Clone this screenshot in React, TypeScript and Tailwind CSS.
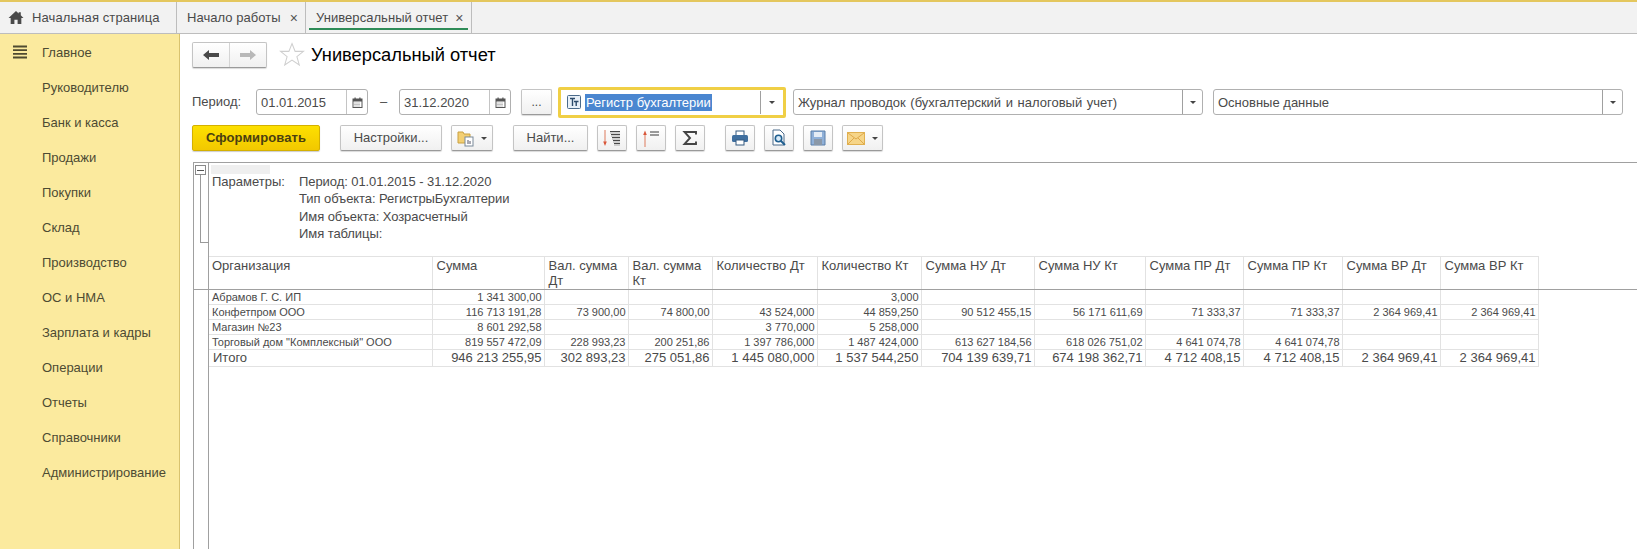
import type { ReactNode } from 'react';

const menu = [
  'Главное',
  'Руководителю',
  'Банк и касса',
  'Продажи',
  'Покупки',
  'Склад',
  'Производство',
  'ОС и НМА',
  'Зарплата и кадры',
  'Операции',
  'Отчеты',
  'Справочники',
  'Администрирование',
];

const columns = [
  { title: 'Организация', w: 'w-[223px]' },
  { title: 'Сумма', w: 'w-[112px]' },
  { title: 'Вал. сумма Дт', w: 'w-[84px]' },
  { title: 'Вал. сумма Кт', w: 'w-[84px]' },
  { title: 'Количество Дт', w: 'w-[105px]' },
  { title: 'Количество Кт', w: 'w-[104px]' },
  { title: 'Сумма НУ Дт', w: 'w-[113px]' },
  { title: 'Сумма НУ Кт', w: 'w-[111px]' },
  { title: 'Сумма ПР Дт', w: 'w-[98px]' },
  { title: 'Сумма ПР Кт', w: 'w-[99px]' },
  { title: 'Сумма ВР Дт', w: 'w-[98px]' },
  { title: 'Сумма ВР Кт', w: 'w-[98px]' },
];

const rows = [
  ['Абрамов Г. С. ИП', '1 341 300,00', '', '', '', '3,000', '', '', '', '', '', ''],
  ['Конфетпром ООО', '116 713 191,28', '73 900,00', '74 800,00', '43 524,000', '44 859,250', '90 512 455,15', '56 171 611,69', '71 333,37', '71 333,37', '2 364 969,41', '2 364 969,41'],
  ['Магазин №23', '8 601 292,58', '', '', '3 770,000', '5 258,000', '', '', '', '', '', ''],
  ['Торговый дом "Комплексный" ООО', '819 557 472,09', '228 993,23', '200 251,86', '1 397 786,000', '1 487 424,000', '613 627 184,56', '618 026 751,02', '4 641 074,78', '4 641 074,78', '', ''],
];

const total = ['Итого', '946 213 255,95', '302 893,23', '275 051,86', '1 445 080,000', '1 537 544,250', '704 139 639,71', '674 198 362,71', '4 712 408,15', '4 712 408,15', '2 364 969,41', '2 364 969,41'];

const btn = 'h-[26px] flex items-center justify-center rounded-[2px] border border-[#c4c4c4] border-b-[#9a9a9a] bg-gradient-to-b from-white to-[#f0f0f0] shadow-[0_1px_1px_rgba(0,0,0,0.15)]';

const Tab = ({ label, active }: { label: string; active?: boolean }) => (
  <div className={`h-full flex items-center border-r border-[#bdbdbd] relative ${active ? 'w-[166px] pl-[10px] gap-[7px]' : 'w-[129px] pl-[10px] gap-[9px]'}`}>
    <span className="text-[13px] tracking-[0.05px] text-[#4a4a4a] whitespace-nowrap">{label}</span>
    <span className="text-[14px] leading-none text-[#555]">×</span>
    {active && <div className="absolute left-[3px] right-[3px] bottom-[3px] h-[2px] bg-[#2e8b57]" />}
  </div>
);

const CalendarIcon = () => (
  <svg width="11" height="11" viewBox="0 0 11 11">
    <rect x="1" y="2" width="9" height="8.500" fill="#fff" stroke="#555" />
    <rect x="1" y="2" width="9" height="2.500" fill="#555" />
    <rect x="2.500" y="0.500" width="1.200" height="2.500" fill="#555" />
    <rect x="7.300" y="0.500" width="1.200" height="2.500" fill="#555" />
    <path d="M2.500 6h6M2.500 7.500h6M2.500 9h6" stroke="#888" strokeDasharray="1 1" />
  </svg>
);

const Caret = () => <span className="w-0 h-0 border-x-[3px] border-x-transparent border-t-[3px] border-t-[#444]" />;

const DateInput = ({ value }: { value: string }) => (
  <div className="w-[112px] h-[26px] flex rounded-[3px] border border-[#b0b0b0] bg-white">
    <span className="flex-1 pl-[4px] text-[13px] leading-[26px] text-[#4a4a4a]">{value}</span>
    <span className="w-[21px] flex items-center justify-center border-l border-[#c4c4c4]">
      <CalendarIcon />
    </span>
  </div>
);

const Combo = ({ value, w, wide }: { value: string; w: string; wide?: boolean }) => (
  <div className={`${w} h-[26px] flex rounded-[3px] border border-[#b0b0b0] bg-white`}>
    <span className={`flex-1 pl-[4px] text-[13px] leading-[25px] text-[#4a4a4a] ${wide ? '[word-spacing:1px]' : ''}`}>{value}</span>
    <span className="w-[20px] flex items-center justify-center border-l border-[#a0a0a0]">
      <Caret />
    </span>
  </div>
);

const IconBtn = ({ children, w = 'w-[30px]', ml = 'ml-[9px]' }: { children: ReactNode; w?: string; ml?: string }) => (
  <button className={`${btn} ${w} ${ml}`}>{children}</button>
);

export default function App() {
  return (
    <div className="w-[1637px] h-[549px] overflow-hidden flex flex-col bg-white font-['Liberation_Sans',Arial,sans-serif]">
      {/* top tabs */}
      <div className="h-[34px] shrink-0 flex items-stretch bg-[#f2f2f2] border-t-2 border-t-[#e4c75e] border-b border-b-[#bdbdbd]">
        <div className="w-[177px] flex items-center border-r border-[#bdbdbd] pl-[8px] gap-[8px]">
          <svg width="16" height="15" viewBox="0 0 15 14">
            <path d="M7.500 1 0.500 7.500h2V13h3.500V9h3v4H12.500V7.500h2L12 5V2h-2v1.200z" fill="#4a4a4a" />
          </svg>
          <span className="text-[13px] tracking-[0.1px] text-[#4a4a4a] whitespace-nowrap">Начальная страница</span>
        </div>
        <Tab label="Начало работы" />
        <Tab label="Универсальный отчет" active />
      </div>

      <div className="flex-1 flex min-h-0">
        {/* sidebar */}
        <div className="w-[180px] shrink-0 bg-[#fbea9e] border-r border-[#d9c36f] pt-[1px] relative">
          <svg className="absolute left-[13px] top-[11px]" width="14" height="14" viewBox="0 0 14 14">
            <path d="M0 1.500h14M0 5.200h14M0 8.900h14M0 12.500h14" stroke="#4f4a30" strokeWidth="1.800" />
          </svg>
          {menu.map((m) => (
            <div key={m} className="h-[35px] pl-[42px] flex items-center text-[13px] text-[#4d4a33] whitespace-nowrap">
              {m}
            </div>
          ))}
        </div>

        {/* content */}
        <div className="flex-1 min-w-0 flex flex-col">
          <div className="h-[51px] shrink-0 pl-[12px] pt-[8px] flex items-start">
            <div className={`${btn} w-[75px]`}>
              <span className="flex-1 h-full flex items-center justify-center border-r border-[#d4d4d4]">
                <svg width="16" height="12" viewBox="0 0 16 12"><path d="M0 6 6 1v3h10v4H6v3z" fill="#4a4a4a" /></svg>
              </span>
              <span className="flex-1 h-full flex items-center justify-center">
                <svg width="16" height="12" viewBox="0 0 16 12"><path d="M16 6 10 1v3H0v4h10v3z" fill="#b8b8b8" /></svg>
              </span>
            </div>
            <svg className="ml-[12px]" width="26" height="25" viewBox="0 0 24 24">
              <path d="M12 1.500 15 9h8l-6.300 5 2.300 8-7-4.700L5 22l2.300-8L1 9h8z" fill="#fff" stroke="#cfcfcf" />
            </svg>
            <h1 className="ml-[6px] text-[18.300px] leading-[26px] text-black whitespace-nowrap">Универсальный отчет</h1>
          </div>

          <div className="h-[34px] shrink-0 pl-[12px] flex items-center">
            <span className="w-[64px] text-[13px] text-[#4a4a4a]">Период:</span>
            <DateInput value="01.01.2015" />
            <span className="w-[31px] text-center text-[13px] text-[#4a4a4a]">–</span>
            <DateInput value="31.12.2020" />
            <button className={`${btn} w-[31px] ml-[10px] text-[12px] text-[#4a4a4a]`}>...</button>
            <div className="w-[228px] h-[31px] ml-[6px] flex items-center rounded-[2px] border-[3px] border-[#f0cf45] bg-white">
              <svg className="ml-[6px]" width="14" height="14" viewBox="0 0 14 14">
                <rect x="0.500" y="0.500" width="13" height="13" rx="1" fill="#e8f0f8" stroke="#4a6a8a" />
                <path d="M3 3.500h5M5.500 3.500V11M7 6.500h4.500M9.200 6.500V11" stroke="#2c4a6a" strokeWidth="1.400" fill="none" />
              </svg>
              <span className="ml-[4px] h-[17px] bg-[#4a86d0] text-white text-[13px] leading-[17px] px-px">Регистр бухгалтерии</span>
              <span className="ml-auto w-[23px] h-[23px] flex items-center justify-center border-l border-[#a0a0a0]">
                <Caret />
              </span>
            </div>
            <div className="ml-[7px]">
              <Combo value="Журнал проводок (бухгалтерский и налоговый учет)" w="w-[410px]" wide />
            </div>
            <div className="ml-[10px]">
              <Combo value="Основные данные" w="w-[410px]" />
            </div>
          </div>

          <div className="h-[26px] mt-[6px] shrink-0 pl-[12px] flex items-center">
            <button className="w-[128px] h-[26px] rounded-[2px] border border-[#d4b000] bg-gradient-to-b from-[#fde000] to-[#f2c800] shadow-[0_1px_1px_rgba(0,0,0,0.2)] text-[13px] tracking-[0.1px] font-bold text-[#4a3f10]">
              Сформировать
            </button>
            <button className={`${btn} w-[102px] ml-[20px] text-[13px] text-[#4a4a4a]`}>Настройки...</button>
            <IconBtn w="w-[42px]">
              <svg width="18" height="18" viewBox="0 0 18 18">
                <path d="M1 3h5l1 2h6v9H1z" fill="#f3cf72" stroke="#c9a040" />
                <rect x="8" y="8" width="8" height="9" fill="#fff" stroke="#7a8a9a" />
                <path d="M11 11v4M13 12v3" stroke="#556" />
              </svg>
              <span className="ml-[6px] flex"><Caret /></span>
            </IconBtn>
            <button className={`${btn} w-[75px] ml-[20px] text-[13px] text-[#4a4a4a]`}>Найти...</button>
            <IconBtn>
              <svg width="20" height="18" viewBox="0 0 20 18">
                <path d="M3 1v14" stroke="#dd7a5c" />
                <path d="M1.200 12.500 3 17 4.800 12.500z" fill="#d9573a" />
                <path d="M8 2.500h10M9 5.500h9M10 8.500h8M11 11.500h7M12 14.500h6" stroke="#4a4a4a" />
                <path d="M8 4h10M9 7h9M10 10h8M11 13h7M12 16h6" stroke="#aaa" />
              </svg>
            </IconBtn>
            <IconBtn>
              <svg width="20" height="18" viewBox="0 0 20 18">
                <path d="M4 4v14" stroke="#dd7a5c" />
                <path d="M2.200 6 4 1.500 5.800 6z" fill="#d9573a" />
                <path d="M9 3h9M9 6h9" stroke="#3a3a3a" strokeWidth="1.200" />
              </svg>
            </IconBtn>
            <IconBtn>
              <svg width="16" height="16" viewBox="0 0 16 16">
                <path d="M14 4.500V2H2.500L8 8l-5.500 6H14v-2.500" fill="none" stroke="#444" strokeWidth="1.900" />
              </svg>
            </IconBtn>
            <IconBtn ml="ml-[20px]">
              <svg width="18" height="16" viewBox="0 0 18 16">
                <rect x="5" y="1" width="8" height="5" fill="#fff" stroke="#345a80" />
                <rect x="1" y="5" width="16" height="7" rx="1.500" fill="#3f6f9f" />
                <rect x="5" y="10" width="8" height="5" fill="#fff" stroke="#345a80" />
              </svg>
            </IconBtn>
            <IconBtn>
              <svg width="18" height="18" viewBox="0 0 18 18">
                <path d="M3 1h7l4 4v11H3z" fill="#fff" stroke="#4a6a8a" />
                <circle cx="8.500" cy="9.500" r="3.200" fill="#d8eaf8" stroke="#1f5f90" strokeWidth="1.600" />
                <path d="M11 12l4 4" stroke="#1f5f90" strokeWidth="2" />
              </svg>
            </IconBtn>
            <IconBtn>
              <svg width="16" height="16" viewBox="0 0 16 16">
                <path d="M1 1h14v14H1z" fill="#8fb0d8" stroke="#5a7fa8" />
                <rect x="4" y="2" width="8" height="5" fill="#e4ecf5" />
                <rect x="4" y="9" width="8" height="6" fill="#8a98a8" />
              </svg>
            </IconBtn>
            <IconBtn w="w-[41px]">
              <svg width="18" height="13" viewBox="0 0 18 13">
                <rect x="0.500" y="0.500" width="17" height="12" fill="#f6d588" stroke="#e0b050" />
                <path d="M1 1l8 6 8-6M1 12l6-6M17 12l-6-6" stroke="#dfa94a" fill="none" />
              </svg>
              <span className="ml-[7px] flex"><Caret /></span>
            </IconBtn>
          </div>

          {/* report */}
          <div className="flex-1 min-h-0 mt-[11px] ml-[13px] border-t border-l border-[#a0a0a0] flex">
            <div className="w-[15px] shrink-0 relative border-r border-[#a0a0a0]">
              <div className="absolute left-[1px] top-[2px] w-[11px] h-[10px] border border-[#8a8a8a] bg-white flex items-center justify-center">
                <div className="w-[7px] h-px bg-[#555]" />
              </div>
              <div className="absolute left-[6px] top-[12px] w-[9px] h-[68px] border-l border-b border-[#9a9a9a]" />
              <div className="absolute left-0 right-0 top-[126px] h-px bg-[#a0a0a0]" />
            </div>

            <div className="flex-1 min-w-0 relative">
              <div className="absolute left-0 right-0 top-[126px] h-px bg-[#a0a0a0]" />
              <div className="h-[93px] relative text-[13px] text-[#4a4a4a]">
                <div className="absolute left-[2px] top-[2px] w-[59px] h-[9px] bg-[#efefef]" />
                <div className="pt-[10px] pl-[3px] flex leading-[17.400px]">
                  <span className="w-[87px]">Параметры:</span>
                  <div className="tracking-[-0.07px]">
                    <div>Период: 01.01.2015 - 31.12.2020</div>
                    <div>Тип объекта: РегистрыБухгалтерии</div>
                    <div>Имя объекта: Хозрасчетный</div>
                    <div>Имя таблицы:</div>
                  </div>
                </div>
              </div>

              <table className="table-fixed border-collapse w-[1329px] text-[#4a4a4a]">
                <thead>
                  <tr className="h-[33px]">
                    {columns.map((c, i) => (
                      <th key={c.title} className={`${c.w} border border-[#e2e2e2] border-l-0 align-top text-left font-normal text-[13px] leading-[15px] pr-[10px] pt-[1px] ${i === 0 ? 'pl-[3px]' : 'pl-[4px]'}`}>
                        {c.title}
                      </th>
                    ))}
                  </tr>
                </thead>
                <tbody>
                  {rows.map((r) => (
                    <tr key={r[0]} className="h-[15px]">
                      {r.map((v, i) => (
                        <td key={i} className={`border border-[#e2e2e2] border-l-0 p-0 pl-[3px] pr-[2px] text-[11px] leading-[14px] whitespace-nowrap ${i === 0 ? 'text-left' : 'text-right'}`}>
                          {v}
                        </td>
                      ))}
                    </tr>
                  ))}
                  <tr className="h-[17px]">
                    {total.map((v, i) => (
                      <td key={i} className={`border border-[#e2e2e2] border-l-0 p-0 pl-[4px] pr-[2px] text-[13px] leading-[16px] whitespace-nowrap ${i === 0 ? 'text-left' : 'text-right'}`}>
                        {v}
                      </td>
                    ))}
                  </tr>
                </tbody>
              </table>
            </div>
          </div>
        </div>
      </div>
    </div>
  );
}
